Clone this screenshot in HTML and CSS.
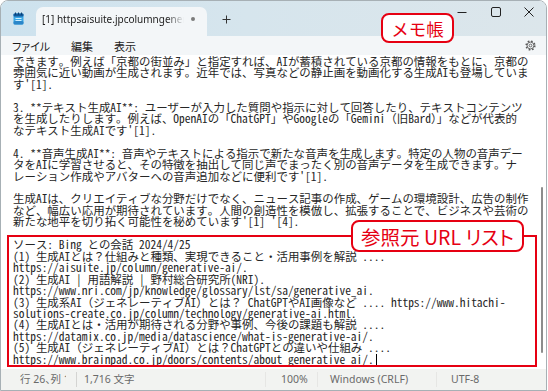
FILE: index.html
```html
<!DOCTYPE html>
<html lang="ja">
<head>
<meta charset="utf-8">
<title>メモ帳</title>
<link rel="stylesheet" href="styles.css">
</head>
<body>
<div class="window">
  <div class="titlebar">
    <div class="appicon">
      <svg width="11" height="13" viewBox="0 0 11 13">
        <rect x="0.5" y="1.5" width="10" height="11" rx="1.5" fill="#3aa6e4"/>
        <rect x="0.5" y="9" width="10" height="3.5" rx="1.5" fill="#2b86c9"/>
        <rect x="0.5" y="1.5" width="10" height="3" rx="1" fill="#11589a"/>
        <rect x="2" y="0.5" width="1" height="2.5" fill="#0b4377"/>
        <rect x="5" y="0.5" width="1" height="2.5" fill="#0b4377"/>
        <rect x="8" y="0.5" width="1" height="2.5" fill="#0b4377"/>
        <rect x="2.5" y="6" width="6" height="1" fill="#cdeeff"/>
        <rect x="2.5" y="8" width="6" height="1" fill="#cdeeff"/>
      </svg>
    </div>
    <div class="tab">
      <span class="tab-title">[1] httpsaisuite.jpcolumngenerative-ai</span>
      <span class="tab-dot"></span>
    </div>
    <div class="newtab">
      <svg width="9" height="9" viewBox="0 0 9 9"><path d="M4.5 0.5v8M0.5 4.5h8" stroke="#333" stroke-width="1" fill="none"/></svg>
    </div>
    <div class="spacer"></div>
    <div class="caption">
      <span class="cbtn"><svg width="10" height="10" viewBox="0 0 10 10"><path d="M0.5 5.5h9" stroke="#222" stroke-width="1"/></svg></span>
      <span class="cbtn"><svg width="10" height="10" viewBox="0 0 10 10"><rect x="0.5" y="0.5" width="9" height="9" rx="1.5" stroke="#222" stroke-width="1" fill="none"/></svg></span>
      <span class="cbtn"><svg width="10" height="10" viewBox="0 0 10 10"><path d="M0.5 0.5l9 9M9.5 0.5l-9 9" stroke="#222" stroke-width="1"/></svg></span>
    </div>
  </div>

  <div class="menubar">
    <span class="menu">ファイル</span>
    <span class="menu">編集</span>
    <span class="menu">表示</span>
    <span class="spacer"></span>
    <span class="gear">
      <svg width="11" height="11" viewBox="0 0 11 11">
        <circle cx="5.5" cy="5.5" r="4.3" fill="none" stroke="#5c5c5c" stroke-width="1.6" stroke-dasharray="1.7 1.68"/>
        <circle cx="5.5" cy="5.5" r="3.4" fill="#f3f6f8" stroke="#5c5c5c" stroke-width="0.9"/>
        <circle cx="5.5" cy="5.5" r="1.4" fill="none" stroke="#5c5c5c" stroke-width="0.9"/>
      </svg>
    </span>
  </div>

  <div class="editor">
    <div class="text">
      <div class="ln">できます。例えば「京都の街並み」と指定すれば、AIが蓄積されている京都の情報をもとに、京都の</div>
      <div class="ln">雰囲気に近い動画が生成されます。近年では、写真などの静止画を動画化する生成AIも登場していま</div>
      <div class="ln">す'[1].</div>
      <div class="ln"></div>
      <div class="ln">3. **テキスト生成AI**: ユーザーが入力した質問や指示に対して回答したり、テキストコンテンツ</div>
      <div class="ln">を生成したりします。例えば、OpenAIの「ChatGPT」やGoogleの「Gemini（旧Bard）」などが代表的</div>
      <div class="ln">なテキスト生成AIです'[1].</div>
      <div class="ln"></div>
      <div class="ln">4. **音声生成AI**: 音声やテキストによる指示で新たな音声を生成します。特定の人物の音声デー</div>
      <div class="ln">タをAIに学習させると、その特徴を抽出して同じ声でまったく別の音声データを生成できます。ナ</div>
      <div class="ln">レーション作成やアバターへの音声追加などに便利です'[1].</div>
      <div class="ln"></div>
      <div class="ln">生成AIは、クリエイティブな分野だけでなく、ニュース記事の作成、ゲームの環境設計、広告の制作</div>
      <div class="ln">など、幅広い応用が期待されています。人間の創造性を模倣し、拡張することで、ビジネスや芸術の</div>
      <div class="ln">新たな地平を切り拓く可能性を秘めています'[1] '[4].</div>
      <div class="ln"></div>
      <div class="ln">ソース: Bing との会話 2024/4/25</div>
      <div class="ln">(1) 生成AIとは？仕組みと種類、実現できること・活用事例を解説 ....</div>
      <div class="ln">https://aisuite.jp/column/generative-ai/.</div>
      <div class="ln">(2) 生成AI | 用語解説 | 野村総合研究所(NRI).</div>
      <div class="ln">https://www.nri.com/jp/knowledge/glossary/lst/sa/generative_ai.</div>
      <div class="ln">(3) 生成系AI（ジェネレーティブAI）とは？ ChatGPTやAI画像など .... https://www.hitachi-</div>
      <div class="ln">solutions-create.co.jp/column/technology/generative-ai.html.</div>
      <div class="ln">(4) 生成AIとは・活用が期待される分野や事例、今後の課題も解説 ....</div>
      <div class="ln">https://datamix.co.jp/media/datascience/what-is-generative-ai/.</div>
      <div class="ln">(5) 生成AI（ジェネレーティブAI）とは？ChatGPTとの違いや仕組み ....</div>
      <div class="ln">https://www.brainpad.co.jp/doors/contents/about_generative_ai/.<span class="caret"></span></div>
    </div>
    <div class="scroll-thumb"></div>
    <div class="refbox"></div>
    <div class="callout callout-refs">参照元 URL リスト</div>
  </div>

  <div class="statusbar">
    <div class="st st-pos"><span class="st-clip">行 26、列 106</span></div>
    <div class="st st-count">1,716 文字</div>
    <div class="st st-zoom">100%</div>
    <div class="st st-eol">Windows (CRLF)</div>
    <div class="st st-enc">UTF-8</div>
  </div>

  <div class="callout callout-app">メモ帳</div>
</div>
</body>
</html>
```

FILE: styles.css
```css
* { box-sizing: border-box; }

html, body {
  margin: 0;
  padding: 0;
  background: #ffffff;
}

body {
  width: 548px;
  height: 391px;
  overflow: hidden;
}

.window {
  position: relative;
  width: 547px;
  height: 391px;
  border: 1px solid #a7b0b5;
  border-radius: 8px 8px 0 0;
  overflow: hidden;
  display: flex;
  flex-direction: column;
  background: #ffffff;
}

/* ---------- title bar ---------- */
.titlebar {
  flex: none;
  height: 35px;
  display: flex;
  align-items: flex-end;
  padding-left: 12px;
  background: linear-gradient(90deg, #cde2ee 0%, #d6e5ed 45%, #dce6eb 100%);
}

.appicon {
  align-self: flex-start;
  margin-top: 11px;
  width: 11px;
  height: 13px;
}

.appicon svg, .newtab svg, .cbtn svg, .gear svg { display: block; }

.tab {
  margin-left: 12px;
  width: 171px;
  height: 29px;
  background: #f3f6f8;
  border-radius: 7px 7px 0 0;
  display: flex;
  align-items: center;
  padding: 0 0 5px 6px;
}

.tab-title {
  width: 142px;
  overflow: hidden;
  white-space: nowrap;
  font-family: "Noto Sans", "Open Sans", sans-serif;
  font-size: 10px;
  line-height: 14px;
  color: #1c1c1c;
  -webkit-mask-image: linear-gradient(90deg, #000 88%, transparent 100%);
  mask-image: linear-gradient(90deg, #000 88%, transparent 100%);
}

.tab-dot {
  width: 4px;
  height: 4px;
  border-radius: 50%;
  background: #7b7b7b;
  margin-left: 7px;
}

.newtab {
  width: 38px;
  height: 29px;
  display: flex;
  align-items: center;
  justify-content: center;
  padding-bottom: 5px;
}

.spacer { flex: 1; }

.caption {
  align-self: flex-start;
  display: flex;
}

.cbtn {
  width: 33.5px;
  height: 21px;
  display: flex;
  align-items: center;
  justify-content: center;
}

/* ---------- menu bar ---------- */
.menubar {
  flex: none;
  height: 19px;
  display: flex;
  align-items: center;
  gap: 21px;
  padding: 0 10px 0 11px;
  background: #f3f6f8;
  font-family: "Noto Sans CJK JP", "Noto Sans", sans-serif;
  font-size: 11px;
  line-height: 14px;
  color: #1b1b1b;
  font-feature-settings: "palt";
}

.gear { width: 11px; height: 11px; }

/* ---------- editor ---------- */
.editor {
  flex: 1;
  position: relative;
  background: #ffffff;
  padding: 1px 0 0 12px;
  overflow: hidden;
}

.text {
  font-family: "Noto Sans Mono CJK JP", "Noto Sans CJK JP", monospace;
  font-size: 11.46px;
  font-weight: 300;
  line-height: 11.46px;
  color: #262626;
}

.ln {
  height: 11.46px;
  white-space: pre;
}

.caret {
  display: inline-block;
  width: 1px;
  height: 11px;
  margin-left: 2px;
  background: #000;
  vertical-align: -1px;
}

.scroll-thumb {
  position: absolute;
  right: 3px;
  top: 132px;
  width: 2.5px;
  height: 166px;
  border-radius: 2px;
  background: #8c8c8c;
}

.refbox {
  position: absolute;
  left: 6px;
  top: 180px;
  width: 530px;
  height: 132px;
  border: 2px solid #e60012;
}

.callout {
  position: absolute;
  border: 2px solid #e60012;
  border-radius: 8px;
  background: #ffffff;
  color: #e60012;
  font-family: "Noto Sans CJK JP", sans-serif;
  display: flex;
  align-items: center;
  justify-content: center;
  white-space: nowrap;
}

.callout-refs {
  left: 350px;
  top: 165px;
  width: 173px;
  height: 32px;
  font-size: 19.5px;
  font-feature-settings: "palt";
}

.callout-app {
  left: 380px;
  top: 12px;
  width: 73px;
  height: 30px;
  font-size: 17.5px;
}

/* ---------- status bar ---------- */
.statusbar {
  flex: none;
  height: 21px;
  display: flex;
  align-items: center;
  background: #f2f3f1;
  font-family: "Noto Sans", "Noto Sans CJK JP", sans-serif;
  font-size: 10.5px;
  color: #6a6a6a;
  white-space: nowrap;
  font-feature-settings: "palt";
}

.st {
  height: 15px;
  line-height: 15px;
  border-right: 1px solid #e6e6e4;
}

.st-pos { width: 76px; padding-left: 19px; border-right-color: #d4d4d2; }
.st-clip { display: block; width: 46px; overflow: hidden; }
.st-count { width: 189px; padding-left: 7px; }
.st-zoom { width: 52px; padding-left: 15px; }
.st-eol { width: 119px; padding-left: 12px; }
.st-enc { flex: 1; padding-left: 14px; border-right: none; }
```
